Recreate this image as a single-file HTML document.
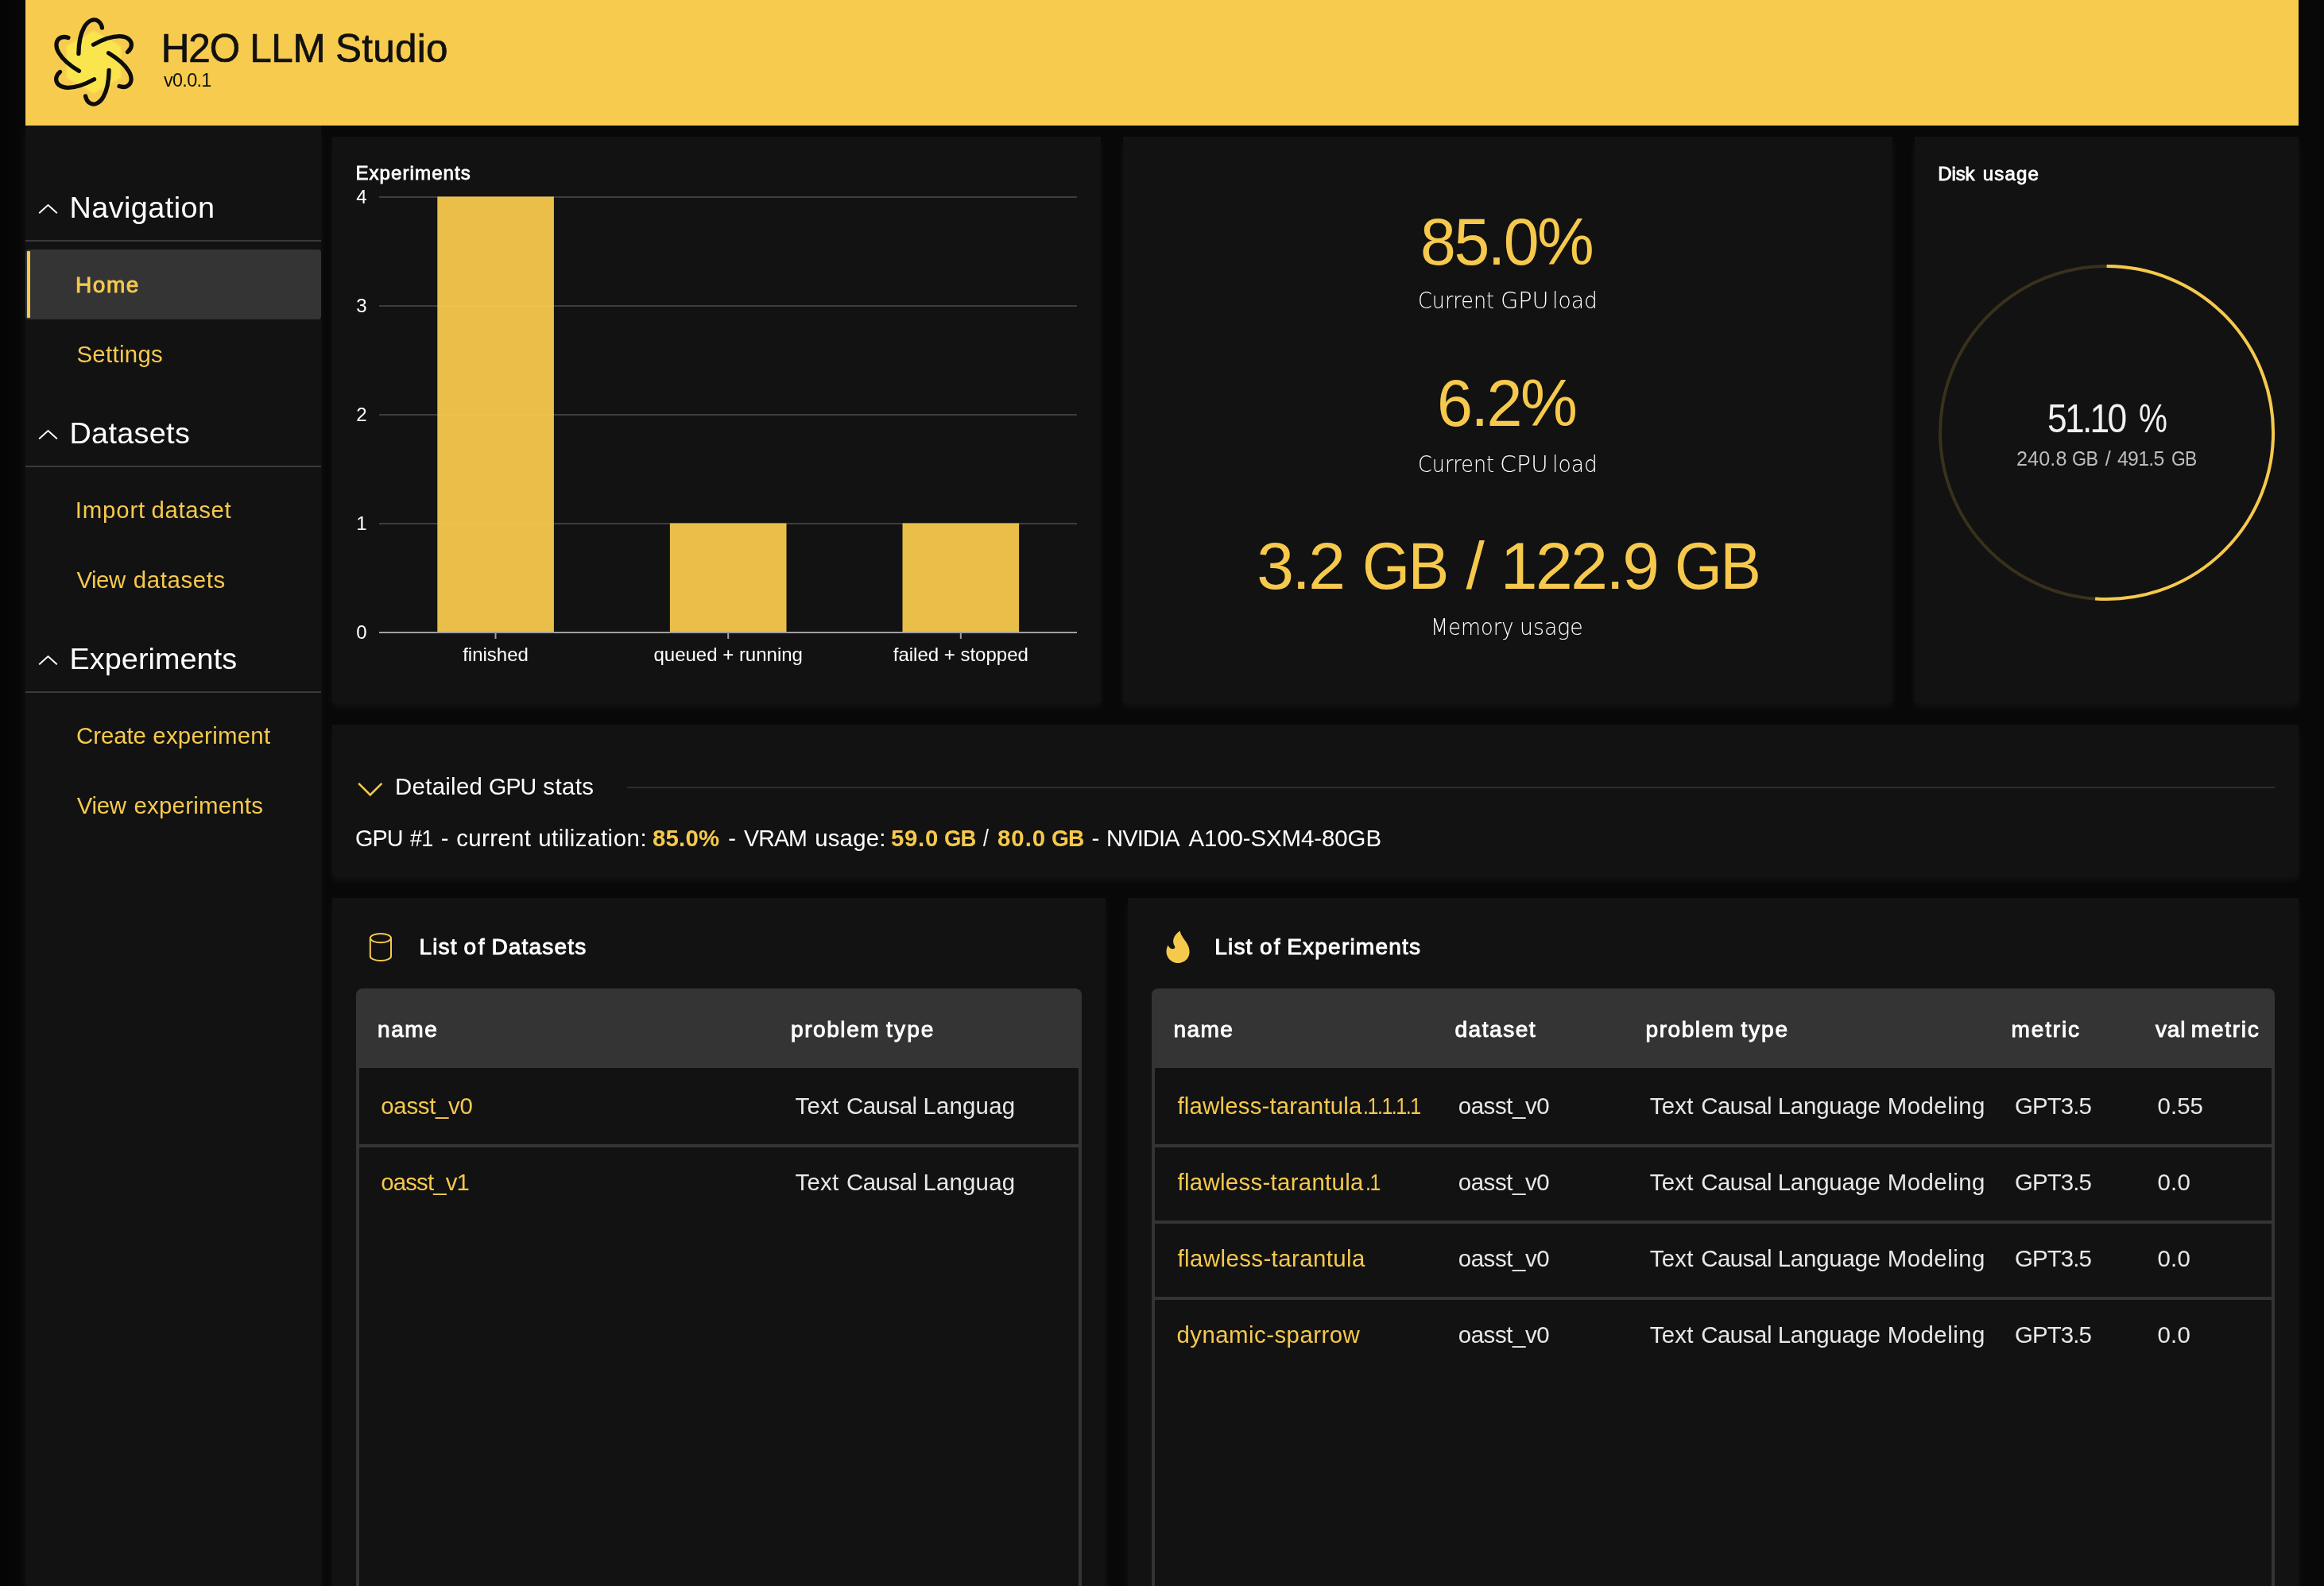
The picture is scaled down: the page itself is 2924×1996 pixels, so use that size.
<!DOCTYPE html>
<html lang="en"><head><meta charset="utf-8"><title>H2O LLM Studio</title>
<style>
html,body{margin:0;padding:0;background:#080808;}
body{width:2924px;height:1996px;overflow:hidden;position:relative;font-family:"Liberation Sans",Arial,Helvetica,sans-serif;}
.t{position:absolute;white-space:nowrap;}
.card{position:absolute;background:#121212;box-shadow:0 6px 10px rgba(255,255,255,.05);}
.div{position:absolute;left:32px;width:372px;height:2px;background:#3a3a3a;}
</style></head><body>
<div id="edgeL" style="position:absolute;left:0;top:0;width:32px;height:1996px;background:linear-gradient(90deg,#050505,#080808)"></div>
<div class="card" id="sidebar" style="left:32px;top:158px;width:372px;height:1838px"></div>
<div class="card" id="c-chart" style="left:418px;top:172px;width:967px;height:712px"></div>
<div class="card" id="c-stats" style="left:1413px;top:172px;width:968px;height:712px"></div>
<div class="card" id="c-disk" style="left:2409px;top:172px;width:483px;height:712px"></div>
<div class="card" id="c-gpu" style="left:418px;top:912px;width:2474px;height:190px"></div>
<div class="card" id="c-ds" style="left:418px;top:1130px;width:973px;height:900px"></div>
<div class="card" id="c-exp" style="left:1419px;top:1130px;width:1473px;height:900px"></div>
<div id="header" style="position:absolute;left:32px;top:0;width:2860px;height:158px;background:#F7CB4E"></div>
<svg style="position:absolute;left:48px;top:8px" width="140" height="140" viewBox="-70 -70 140 140">
<defs><filter id="lb" x="-30%" y="-30%" width="160%" height="160%"><feGaussianBlur stdDeviation="1.3"/></filter></defs>
<polygon points="0.0,-39.5 34.2,-19.8 34.2,19.7 0.0,39.5 -34.2,19.8 -34.2,-19.8" fill="#FAE54D" filter="url(#lb)"/>
<g fill="none" stroke="#0d0d0d" stroke-width="5.4" stroke-linecap="round" transform="scale(0.985)"><path d="M -19.4 -10.6 C -19.2 -24 -16.5 -37 -12.2 -44.5 C -7 -53.6 0.5 -56 6 -52 C 8.5 -50 10 -47 10.6 -43.7" transform="rotate(0)"/><path d="M -19.4 -10.6 C -19.2 -24 -16.5 -37 -12.2 -44.5 C -7 -53.6 0.5 -56 6 -52 C 8.5 -50 10 -47 10.6 -43.7" transform="rotate(60)"/><path d="M -19.4 -10.6 C -19.2 -24 -16.5 -37 -12.2 -44.5 C -7 -53.6 0.5 -56 6 -52 C 8.5 -50 10 -47 10.6 -43.7" transform="rotate(120)"/><path d="M -19.4 -10.6 C -19.2 -24 -16.5 -37 -12.2 -44.5 C -7 -53.6 0.5 -56 6 -52 C 8.5 -50 10 -47 10.6 -43.7" transform="rotate(180)"/><path d="M -19.4 -10.6 C -19.2 -24 -16.5 -37 -12.2 -44.5 C -7 -53.6 0.5 -56 6 -52 C 8.5 -50 10 -47 10.6 -43.7" transform="rotate(240)"/><path d="M -19.4 -10.6 C -19.2 -24 -16.5 -37 -12.2 -44.5 C -7 -53.6 0.5 -56 6 -52 C 8.5 -50 10 -47 10.6 -43.7" transform="rotate(300)"/></g>
</svg>
<div class="div" style="top:302px"></div>
<div class="div" style="top:586px"></div>
<div class="div" style="top:870px"></div>
<svg style="position:absolute;left:46.5px;top:253.5px" width="28" height="18" viewBox="0 0 28 18"><polyline points="2.2,14.2 13.5,4 24.8,14.2" fill="none" stroke="#fff" stroke-width="1.9"/></svg>
<svg style="position:absolute;left:46.5px;top:537.5px" width="28" height="18" viewBox="0 0 28 18"><polyline points="2.2,14.2 13.5,4 24.8,14.2" fill="none" stroke="#fff" stroke-width="1.9"/></svg>
<svg style="position:absolute;left:46.5px;top:821.7px" width="28" height="18" viewBox="0 0 28 18"><polyline points="2.2,14.2 13.5,4 24.8,14.2" fill="none" stroke="#fff" stroke-width="1.9"/></svg>
<div id="nav-active" style="position:absolute;left:32px;top:314px;width:372px;height:88px;background:#343434;border-radius:4px"></div>
<div style="position:absolute;left:34px;top:316px;width:4px;height:84px;background:#F6C94D;border-radius:1px"></div>
<svg style="position:absolute;left:418px;top:172px;will-change:transform" width="967" height="712" viewBox="418 172 967 712" font-family="Liberation Sans, Arial, sans-serif" font-size="24" fill="#fff">
<rect x="477" y="247" width="878" height="2" fill="#3d3d3d"/>
<rect x="477" y="384" width="878" height="2" fill="#3d3d3d"/>
<rect x="477" y="521" width="878" height="2" fill="#3d3d3d"/>
<rect x="477" y="658" width="878" height="2" fill="#3d3d3d"/>
<rect x="550.3" y="247.5" width="146.6" height="548.5" fill="#F6C94D" fill-opacity="0.95"/>
<rect x="842.9" y="658.5" width="146.6" height="137.5" fill="#F6C94D" fill-opacity="0.95"/>
<rect x="1135.5" y="658.5" width="146.6" height="137.5" fill="#F6C94D" fill-opacity="0.95"/>
<rect x="477" y="795" width="878" height="2" fill="#a0a0a0"/>
<rect x="622.5" y="797" width="2" height="7" fill="#a0a0a0"/>
<rect x="915.2" y="797" width="2" height="7" fill="#a0a0a0"/>
<rect x="1207.8" y="797" width="2" height="7" fill="#a0a0a0"/>
<text x="448.2" y="256.4">4</text>
<text x="448.2" y="393.4">3</text>
<text x="448.2" y="530.4">2</text>
<text x="448.2" y="667.4">1</text>
<text x="448.2" y="804.4">0</text>
<text x="623.5" y="831.8" text-anchor="middle">finished</text>
<text x="916.2" y="831.8" text-anchor="middle">queued + running</text>
<text x="1208.8" y="831.8" text-anchor="middle">failed + stopped</text>
</svg>
<svg style="position:absolute;left:2409px;top:300px" width="483" height="490" viewBox="2409 300 483 490">
<circle cx="2650.6" cy="544.5" r="209.5" fill="none" stroke="#3a311c" stroke-width="4"/>
<path d="M 2650.6 335.0 A 209.5 209.5 0 1 1 2636.13 753.50" fill="none" stroke="#F6C94D" stroke-width="4"/>
</svg>
<svg style="position:absolute;left:448px;top:980px" width="36" height="26" viewBox="0 0 36 26"><polyline points="3.2,5.8 17.8,20.4 32.4,5.8" fill="none" stroke="#F6C94D" stroke-width="2.6"/></svg>
<div style="position:absolute;left:789px;top:990px;width:2073px;height:2px;background:#2c2c2c"></div>
<svg style="position:absolute;left:460px;top:1170px" width="38" height="44" viewBox="460 1170 38 44" fill="none" stroke="#F6C94D" stroke-width="2"><ellipse cx="478.9" cy="1180.6" rx="13.1" ry="5.6"/><path d="M465.8 1180.6 V1203.4 A13.1 5.6 0 0 0 492 1203.4 V1180.6"/></svg>
<svg style="position:absolute;left:1464px;top:1168px" width="36" height="48" viewBox="0 0 36 48"><path d="M20.5 3.5 C22 10 26 13.5 29.5 19.5 C33 25.5 33.8 32 30.5 37.5 C27.5 42 22.5 44.3 17.5 44 C11 43.6 5.2 39 3.8 32.5 C3 28.5 3.8 24.5 5.6 21.5 C6.8 24.5 9 26.5 12 26.3 C14.5 26 14.8 24 13.6 22 C11.5 18.5 11.6 13.5 14.5 9.5 C16 7.3 18.3 5 20.5 3.5 Z" fill="#F6C94D"/></svg>
<div style="position:absolute;left:448.4px;top:1244px;width:913px;height:100px;background:#343434;border-radius:8px 8px 0 0"></div>
<div style="position:absolute;left:448.4px;top:1344px;width:905px;height:700px;border-left:4px solid #343434;border-right:4px solid #343434"></div>
<div style="position:absolute;left:452.4px;top:1440px;width:905px;height:4px;background:#343434"></div>
<div style="position:absolute;left:1449px;top:1244px;width:1413px;height:100px;background:#343434;border-radius:8px 8px 0 0"></div>
<div style="position:absolute;left:1449px;top:1344px;width:1405px;height:700px;border-left:4px solid #343434;border-right:4px solid #343434"></div>
<div style="position:absolute;left:1453px;top:1440px;width:1405px;height:4px;background:#343434"></div>
<div style="position:absolute;left:1453px;top:1536px;width:1405px;height:4px;background:#343434"></div>
<div style="position:absolute;left:1453px;top:1632px;width:1405px;height:4px;background:#343434"></div>
<div id="txt" style="position:absolute;left:0;top:0;width:2924px;height:1996px;will-change:transform">
<span class="t" style="left:202.70px;top:35.50px;font-size:49.4px;line-height:49.4px;color:#111111;letter-spacing:-1.019px;-webkit-text-stroke:0.7px #111111;">H2O</span>
<span class="t" style="left:314.20px;top:35.50px;font-size:49.4px;line-height:49.4px;color:#111111;letter-spacing:-0.319px;-webkit-text-stroke:0.7px #111111;">LLM</span>
<span class="t" style="left:422.10px;top:35.50px;font-size:49.4px;line-height:49.4px;color:#111111;letter-spacing:0.245px;-webkit-text-stroke:0.7px #111111;">Studio</span>
<span class="t" style="left:205.80px;top:88.90px;font-size:24.2px;line-height:24.2px;color:#111111;letter-spacing:-0.726px;transform:scaleX(0.9691);transform-origin:0 0;">v0.0.1</span>
<span class="t" style="left:87.50px;top:242.60px;font-size:37.8px;line-height:37.8px;color:#ffffff;letter-spacing:0.425px;">Navigation</span>
<span class="t" style="left:87.50px;top:526.60px;font-size:37.8px;line-height:37.8px;color:#ffffff;letter-spacing:0.306px;">Datasets</span>
<span class="t" style="left:87.60px;top:810.80px;font-size:37.8px;line-height:37.8px;color:#ffffff;letter-spacing:0.044px;">Experiments</span>
<span class="t" style="left:95.00px;top:344.65px;font-size:28.1px;line-height:28.1px;color:#F6C94D;letter-spacing:1.488px;-webkit-text-stroke:0.92px #F6C94D;">Home</span>
<span class="t" style="left:96.40px;top:431.30px;font-size:29.4px;line-height:29.4px;color:#F6C94D;letter-spacing:0.314px;">Settings</span>
<span class="t" style="left:94.80px;top:627.00px;font-size:29.4px;line-height:29.4px;color:#F6C94D;letter-spacing:0.815px;">Import</span>
<span class="t" style="left:190.50px;top:627.00px;font-size:29.4px;line-height:29.4px;color:#F6C94D;letter-spacing:0.643px;">dataset</span>
<span class="t" style="left:96.60px;top:715.20px;font-size:29.4px;line-height:29.4px;color:#F6C94D;letter-spacing:-0.549px;">View</span>
<span class="t" style="left:167.80px;top:715.20px;font-size:29.4px;line-height:29.4px;color:#F6C94D;letter-spacing:0.599px;">datasets</span>
<span class="t" style="left:96.10px;top:910.80px;font-size:29.4px;line-height:29.4px;color:#F6C94D;letter-spacing:-0.074px;">Create</span>
<span class="t" style="left:192.30px;top:910.80px;font-size:29.4px;line-height:29.4px;color:#F6C94D;letter-spacing:0.264px;">experiment</span>
<span class="t" style="left:96.80px;top:999.00px;font-size:29.4px;line-height:29.4px;color:#F6C94D;letter-spacing:-0.316px;">View</span>
<span class="t" style="left:168.50px;top:999.00px;font-size:29.4px;line-height:29.4px;color:#F6C94D;letter-spacing:0.231px;">experiments</span>
<span class="t" style="left:447.40px;top:206.25px;font-size:24.1px;line-height:24.1px;color:#ffffff;letter-spacing:1.055px;-webkit-text-stroke:0.79px #ffffff;">Experiments</span>
<span class="t" style="left:2438.30px;top:206.85px;font-size:24.1px;line-height:24.1px;color:#ffffff;letter-spacing:-0.163px;-webkit-text-stroke:0.79px #ffffff;">Disk</span>
<span class="t" style="left:2494.70px;top:206.85px;font-size:24.1px;line-height:24.1px;color:#ffffff;letter-spacing:1.141px;-webkit-text-stroke:0.79px #ffffff;">usage</span>
<span class="t" style="left:1786.82px;top:261.70px;font-size:84.0px;line-height:84.0px;color:#F6C94D;letter-spacing:-2.520px;transform:scaleX(0.9590);transform-origin:0 0;">85.0%</span>
<span class="t" style="left:1784.18px;top:365.20px;font-size:28px;line-height:28px;color:#ffffff;font-weight:200;font-family:'DejaVu Sans',sans-serif;transform:scaleX(0.9087);transform-origin:0 0;">Current</span>
<span class="t" style="left:1887.55px;top:365.20px;font-size:28px;line-height:28px;color:#ffffff;font-weight:200;font-family:'DejaVu Sans',sans-serif;transform:scaleX(1.0260);transform-origin:0 0;">GPU</span>
<span class="t" style="left:1953.45px;top:365.20px;font-size:28px;line-height:28px;color:#ffffff;font-weight:200;font-family:'DejaVu Sans',sans-serif;transform:scaleX(0.9488);transform-origin:0 0;">load</span>
<span class="t" style="left:1807.75px;top:464.60px;font-size:84.0px;line-height:84.0px;color:#F6C94D;letter-spacing:-2.520px;transform:scaleX(0.9616);transform-origin:0 0;">6.2%</span>
<span class="t" style="left:1784.18px;top:570.50px;font-size:28px;line-height:28px;color:#ffffff;font-weight:200;font-family:'DejaVu Sans',sans-serif;transform:scaleX(0.9087);transform-origin:0 0;">Current</span>
<span class="t" style="left:1887.46px;top:570.50px;font-size:28px;line-height:28px;color:#ffffff;font-weight:200;font-family:'DejaVu Sans',sans-serif;transform:scaleX(1.0680);transform-origin:0 0;">CPU</span>
<span class="t" style="left:1953.45px;top:570.50px;font-size:28px;line-height:28px;color:#ffffff;font-weight:200;font-family:'DejaVu Sans',sans-serif;transform:scaleX(0.9488);transform-origin:0 0;">load</span>
<span class="t" style="left:1581.20px;top:670.30px;font-size:84.0px;line-height:84.0px;color:#F6C94D;letter-spacing:-2.477px;">3.2</span>
<span class="t" style="left:1714.03px;top:670.30px;font-size:84.0px;line-height:84.0px;color:#F6C94D;letter-spacing:-2.520px;transform:scaleX(0.9177);transform-origin:0 0;">GB</span>
<span class="t" style="left:1844.45px;top:670.30px;font-size:84.0px;line-height:84.0px;color:#F6C94D;">/</span>
<span class="t" style="left:1887.80px;top:670.30px;font-size:84.0px;line-height:84.0px;color:#F6C94D;letter-spacing:-2.520px;">122.9</span>
<span class="t" style="left:2107.34px;top:670.30px;font-size:84.0px;line-height:84.0px;color:#F6C94D;letter-spacing:-2.520px;transform:scaleX(0.9150);transform-origin:0 0;">GB</span>
<span class="t" style="left:1799.83px;top:775.80px;font-size:28px;line-height:28px;color:#ffffff;font-weight:200;font-family:'DejaVu Sans',sans-serif;transform:scaleX(0.9167);transform-origin:0 0;">Memory</span>
<span class="t" style="left:1912.23px;top:775.80px;font-size:28px;line-height:28px;color:#ffffff;font-weight:200;font-family:'DejaVu Sans',sans-serif;transform:scaleX(0.9559);transform-origin:0 0;">usage</span>
<span class="t" style="left:2575.64px;top:502.30px;font-size:50.4px;line-height:50.4px;color:#f0f0f0;letter-spacing:-3.024px;transform:scaleX(0.8794);transform-origin:0 0;">51.10</span>
<span class="t" style="left:2690.70px;top:502.30px;font-size:50.4px;line-height:50.4px;color:#f0f0f0;transform:scaleX(0.8023);transform-origin:0 0;">%</span>
<span class="t" style="left:2536.90px;top:565.40px;font-size:25.2px;line-height:25.2px;color:#bdbdbd;letter-spacing:0.119px;">240.8</span>
<span class="t" style="left:2607.47px;top:565.40px;font-size:25.2px;line-height:25.2px;color:#bdbdbd;letter-spacing:-0.756px;transform:scaleX(0.9251);transform-origin:0 0;">GB</span>
<span class="t" style="left:2648.80px;top:565.40px;font-size:25.2px;line-height:25.2px;color:#bdbdbd;">/</span>
<span class="t" style="left:2664.30px;top:565.40px;font-size:25.2px;line-height:25.2px;color:#bdbdbd;letter-spacing:-0.756px;transform:scaleX(0.9865);transform-origin:0 0;">491.5</span>
<span class="t" style="left:2731.69px;top:565.40px;font-size:25.2px;line-height:25.2px;color:#bdbdbd;letter-spacing:-0.756px;transform:scaleX(0.9073);transform-origin:0 0;">GB</span>
<span class="t" style="left:497.00px;top:974.50px;font-size:29.4px;line-height:29.4px;color:#ffffff;letter-spacing:0.302px;">Detailed</span>
<span class="t" style="left:614.63px;top:974.50px;font-size:29.4px;line-height:29.4px;color:#ffffff;letter-spacing:-0.882px;transform:scaleX(0.9727);transform-origin:0 0;">GPU</span>
<span class="t" style="left:683.30px;top:974.50px;font-size:29.4px;line-height:29.4px;color:#ffffff;letter-spacing:0.407px;">stats</span>
<span class="t" style="left:447.42px;top:1040.00px;font-size:29.4px;line-height:29.4px;color:#ffffff;letter-spacing:-0.882px;transform:scaleX(0.9778);transform-origin:0 0;">GPU</span>
<span class="t" style="left:516.20px;top:1040.00px;font-size:29.4px;line-height:29.4px;color:#ffffff;letter-spacing:-0.882px;transform:scaleX(0.9191);transform-origin:0 0;">#1</span>
<span class="t" style="left:554.75px;top:1040.00px;font-size:29.4px;line-height:29.4px;color:#ffffff;">-</span>
<span class="t" style="left:574.20px;top:1040.00px;font-size:29.4px;line-height:29.4px;color:#ffffff;letter-spacing:0.382px;">current</span>
<span class="t" style="left:677.20px;top:1040.00px;font-size:29.4px;line-height:29.4px;color:#ffffff;letter-spacing:0.516px;">utilization:</span>
<span class="t" style="left:821.00px;top:1040.00px;font-size:29.4px;line-height:29.4px;color:#F6C94D;font-weight:700;letter-spacing:0.199px;">85.0%</span>
<span class="t" style="left:916.15px;top:1040.00px;font-size:29.4px;line-height:29.4px;color:#ffffff;">-</span>
<span class="t" style="left:936.30px;top:1040.00px;font-size:29.4px;line-height:29.4px;color:#ffffff;letter-spacing:-0.882px;transform:scaleX(0.9705);transform-origin:0 0;">VRAM</span>
<span class="t" style="left:1025.20px;top:1040.00px;font-size:29.4px;line-height:29.4px;color:#ffffff;letter-spacing:0.184px;">usage:</span>
<span class="t" style="left:1121.00px;top:1040.00px;font-size:29.4px;line-height:29.4px;color:#F6C94D;font-weight:700;letter-spacing:0.714px;">59.0</span>
<span class="t" style="left:1188.07px;top:1040.00px;font-size:29.4px;line-height:29.4px;color:#F6C94D;font-weight:700;letter-spacing:-0.882px;transform:scaleX(0.9346);transform-origin:0 0;">GB</span>
<span class="t" style="left:1237.00px;top:1040.00px;font-size:29.4px;line-height:29.4px;color:#ffffff;transform:scaleX(0.8444);transform-origin:0 0;">/</span>
<span class="t" style="left:1255.00px;top:1040.00px;font-size:29.4px;line-height:29.4px;color:#F6C94D;font-weight:700;letter-spacing:0.981px;">80.0</span>
<span class="t" style="left:1323.44px;top:1040.00px;font-size:29.4px;line-height:29.4px;color:#F6C94D;font-weight:700;letter-spacing:-0.882px;transform:scaleX(0.9566);transform-origin:0 0;">GB</span>
<span class="t" style="left:1373.55px;top:1040.00px;font-size:29.4px;line-height:29.4px;color:#ffffff;">-</span>
<span class="t" style="left:1392.02px;top:1040.00px;font-size:29.4px;line-height:29.4px;color:#ffffff;letter-spacing:-0.882px;transform:scaleX(0.9894);transform-origin:0 0;">NVIDIA</span>
<span class="t" style="left:1495.40px;top:1040.00px;font-size:29.4px;line-height:29.4px;color:#ffffff;letter-spacing:-0.062px;">A100-SXM4-80GB</span>
<span class="t" style="left:527.50px;top:1178.45px;font-size:28.1px;line-height:28.1px;color:#ffffff;letter-spacing:1.089px;-webkit-text-stroke:0.92px #ffffff;">List</span>
<span class="t" style="left:583.60px;top:1178.45px;font-size:28.1px;line-height:28.1px;color:#ffffff;letter-spacing:2.529px;-webkit-text-stroke:0.92px #ffffff;">of</span>
<span class="t" style="left:618.40px;top:1178.45px;font-size:28.1px;line-height:28.1px;color:#ffffff;letter-spacing:1.137px;-webkit-text-stroke:0.92px #ffffff;">Datasets</span>
<span class="t" style="left:1528.30px;top:1178.45px;font-size:28.1px;line-height:28.1px;color:#ffffff;letter-spacing:1.122px;-webkit-text-stroke:0.92px #ffffff;">List</span>
<span class="t" style="left:1585.00px;top:1178.45px;font-size:28.1px;line-height:28.1px;color:#ffffff;letter-spacing:2.156px;-webkit-text-stroke:0.92px #ffffff;">of</span>
<span class="t" style="left:1619.20px;top:1178.45px;font-size:28.1px;line-height:28.1px;color:#ffffff;letter-spacing:1.169px;-webkit-text-stroke:0.92px #ffffff;">Experiments</span>
<span class="t" style="left:475.00px;top:1282.05px;font-size:28.1px;line-height:28.1px;color:#ffffff;letter-spacing:1.510px;-webkit-text-stroke:0.92px #ffffff;">name</span>
<span class="t" style="left:995.00px;top:1282.05px;font-size:28.1px;line-height:28.1px;color:#ffffff;letter-spacing:1.531px;-webkit-text-stroke:0.92px #ffffff;">problem</span>
<span class="t" style="left:1115.10px;top:1282.05px;font-size:28.1px;line-height:28.1px;color:#ffffff;letter-spacing:2.101px;-webkit-text-stroke:0.92px #ffffff;">type</span>
<span class="t" style="left:479.30px;top:1376.60px;font-size:29.4px;line-height:29.4px;color:#F6C94D;letter-spacing:-0.298px;">oasst_v0</span>
<span class="t" style="left:1000.50px;top:1376.60px;font-size:29.4px;line-height:29.4px;color:#e8e8e8;letter-spacing:0.255px;">Text</span>
<span class="t" style="left:1064.90px;top:1376.60px;font-size:29.4px;line-height:29.4px;color:#e8e8e8;letter-spacing:-0.451px;">Causal</span>
<span class="t" style="left:1161.40px;top:1376.60px;font-size:29.4px;line-height:29.4px;color:#e8e8e8;letter-spacing:0.204px;">Languag</span>
<span class="t" style="left:479.30px;top:1472.60px;font-size:29.4px;line-height:29.4px;color:#F6C94D;letter-spacing:-0.856px;">oasst_v1</span>
<span class="t" style="left:1000.50px;top:1472.60px;font-size:29.4px;line-height:29.4px;color:#e8e8e8;letter-spacing:0.255px;">Text</span>
<span class="t" style="left:1064.90px;top:1472.60px;font-size:29.4px;line-height:29.4px;color:#e8e8e8;letter-spacing:-0.451px;">Causal</span>
<span class="t" style="left:1161.40px;top:1472.60px;font-size:29.4px;line-height:29.4px;color:#e8e8e8;letter-spacing:0.204px;">Languag</span>
<span class="t" style="left:1476.60px;top:1282.05px;font-size:28.1px;line-height:28.1px;color:#ffffff;letter-spacing:1.343px;-webkit-text-stroke:0.92px #ffffff;">name</span>
<span class="t" style="left:1830.40px;top:1282.05px;font-size:28.1px;line-height:28.1px;color:#ffffff;letter-spacing:1.522px;-webkit-text-stroke:0.92px #ffffff;">dataset</span>
<span class="t" style="left:2070.50px;top:1282.05px;font-size:28.1px;line-height:28.1px;color:#ffffff;letter-spacing:1.531px;-webkit-text-stroke:0.92px #ffffff;">problem</span>
<span class="t" style="left:2190.60px;top:1282.05px;font-size:28.1px;line-height:28.1px;color:#ffffff;letter-spacing:1.801px;-webkit-text-stroke:0.92px #ffffff;">type</span>
<span class="t" style="left:2530.50px;top:1282.05px;font-size:28.1px;line-height:28.1px;color:#ffffff;letter-spacing:1.830px;-webkit-text-stroke:0.92px #ffffff;">metric</span>
<span class="t" style="left:2712.00px;top:1282.05px;font-size:28.1px;line-height:28.1px;color:#ffffff;letter-spacing:0.804px;-webkit-text-stroke:0.92px #ffffff;">val</span>
<span class="t" style="left:2756.80px;top:1282.05px;font-size:28.1px;line-height:28.1px;color:#ffffff;letter-spacing:1.710px;-webkit-text-stroke:0.92px #ffffff;">metric</span>
<span class="t" style="left:1481.50px;top:1376.60px;font-size:29.4px;line-height:29.4px;color:#F6C94D;letter-spacing:0.185px;">flawless-tarantula</span>
<span class="t" style="left:1715.29px;top:1376.60px;font-size:29.4px;line-height:29.4px;color:#F6C94D;letter-spacing:-1.764px;transform:scaleX(0.8537);transform-origin:0 0;">.1.1.1.1</span>
<span class="t" style="left:1834.70px;top:1376.60px;font-size:29.4px;line-height:29.4px;color:#e8e8e8;letter-spacing:-0.398px;">oasst_v0</span>
<span class="t" style="left:2075.80px;top:1376.60px;font-size:29.4px;line-height:29.4px;color:#e8e8e8;letter-spacing:0.255px;">Text</span>
<span class="t" style="left:2140.20px;top:1376.60px;font-size:29.4px;line-height:29.4px;color:#e8e8e8;letter-spacing:-0.451px;">Causal</span>
<span class="t" style="left:2236.70px;top:1376.60px;font-size:29.4px;line-height:29.4px;color:#e8e8e8;letter-spacing:-0.189px;">Language</span>
<span class="t" style="left:2374.70px;top:1376.60px;font-size:29.4px;line-height:29.4px;color:#e8e8e8;letter-spacing:0.482px;">Modeling</span>
<span class="t" style="left:2535.00px;top:1376.60px;font-size:29.4px;line-height:29.4px;color:#e8e8e8;letter-spacing:-0.882px;">GPT3.5</span>
<span class="t" style="left:2714.60px;top:1376.60px;font-size:29.4px;line-height:29.4px;color:#e8e8e8;letter-spacing:0.048px;">0.55</span>
<span class="t" style="left:1481.50px;top:1472.60px;font-size:29.4px;line-height:29.4px;color:#F6C94D;letter-spacing:0.303px;">flawless-tarantula</span>
<span class="t" style="left:1718.31px;top:1472.60px;font-size:29.4px;line-height:29.4px;color:#F6C94D;letter-spacing:-1.764px;transform:scaleX(0.8453);transform-origin:0 0;">.1</span>
<span class="t" style="left:1834.70px;top:1472.60px;font-size:29.4px;line-height:29.4px;color:#e8e8e8;letter-spacing:-0.398px;">oasst_v0</span>
<span class="t" style="left:2075.80px;top:1472.60px;font-size:29.4px;line-height:29.4px;color:#e8e8e8;letter-spacing:0.255px;">Text</span>
<span class="t" style="left:2140.20px;top:1472.60px;font-size:29.4px;line-height:29.4px;color:#e8e8e8;letter-spacing:-0.451px;">Causal</span>
<span class="t" style="left:2236.70px;top:1472.60px;font-size:29.4px;line-height:29.4px;color:#e8e8e8;letter-spacing:-0.189px;">Language</span>
<span class="t" style="left:2374.70px;top:1472.60px;font-size:29.4px;line-height:29.4px;color:#e8e8e8;letter-spacing:0.482px;">Modeling</span>
<span class="t" style="left:2535.00px;top:1472.60px;font-size:29.4px;line-height:29.4px;color:#e8e8e8;letter-spacing:-0.882px;">GPT3.5</span>
<span class="t" style="left:2714.60px;top:1472.60px;font-size:29.4px;line-height:29.4px;color:#e8e8e8;letter-spacing:0.144px;">0.0</span>
<span class="t" style="left:1481.50px;top:1568.60px;font-size:29.4px;line-height:29.4px;color:#F6C94D;letter-spacing:0.421px;">flawless-tarantula</span>
<span class="t" style="left:1834.70px;top:1568.60px;font-size:29.4px;line-height:29.4px;color:#e8e8e8;letter-spacing:-0.398px;">oasst_v0</span>
<span class="t" style="left:2075.80px;top:1568.60px;font-size:29.4px;line-height:29.4px;color:#e8e8e8;letter-spacing:0.255px;">Text</span>
<span class="t" style="left:2140.20px;top:1568.60px;font-size:29.4px;line-height:29.4px;color:#e8e8e8;letter-spacing:-0.451px;">Causal</span>
<span class="t" style="left:2236.70px;top:1568.60px;font-size:29.4px;line-height:29.4px;color:#e8e8e8;letter-spacing:-0.189px;">Language</span>
<span class="t" style="left:2374.70px;top:1568.60px;font-size:29.4px;line-height:29.4px;color:#e8e8e8;letter-spacing:0.482px;">Modeling</span>
<span class="t" style="left:2535.00px;top:1568.60px;font-size:29.4px;line-height:29.4px;color:#e8e8e8;letter-spacing:-0.882px;">GPT3.5</span>
<span class="t" style="left:2714.60px;top:1568.60px;font-size:29.4px;line-height:29.4px;color:#e8e8e8;letter-spacing:0.144px;">0.0</span>
<span class="t" style="left:1480.50px;top:1664.60px;font-size:29.4px;line-height:29.4px;color:#F6C94D;letter-spacing:0.462px;">dynamic-sparrow</span>
<span class="t" style="left:1834.70px;top:1664.60px;font-size:29.4px;line-height:29.4px;color:#e8e8e8;letter-spacing:-0.398px;">oasst_v0</span>
<span class="t" style="left:2075.80px;top:1664.60px;font-size:29.4px;line-height:29.4px;color:#e8e8e8;letter-spacing:0.255px;">Text</span>
<span class="t" style="left:2140.20px;top:1664.60px;font-size:29.4px;line-height:29.4px;color:#e8e8e8;letter-spacing:-0.451px;">Causal</span>
<span class="t" style="left:2236.70px;top:1664.60px;font-size:29.4px;line-height:29.4px;color:#e8e8e8;letter-spacing:-0.189px;">Language</span>
<span class="t" style="left:2374.70px;top:1664.60px;font-size:29.4px;line-height:29.4px;color:#e8e8e8;letter-spacing:0.482px;">Modeling</span>
<span class="t" style="left:2535.00px;top:1664.60px;font-size:29.4px;line-height:29.4px;color:#e8e8e8;letter-spacing:-0.882px;">GPT3.5</span>
<span class="t" style="left:2714.60px;top:1664.60px;font-size:29.4px;line-height:29.4px;color:#e8e8e8;letter-spacing:0.144px;">0.0</span>
</div>
</body></html>
